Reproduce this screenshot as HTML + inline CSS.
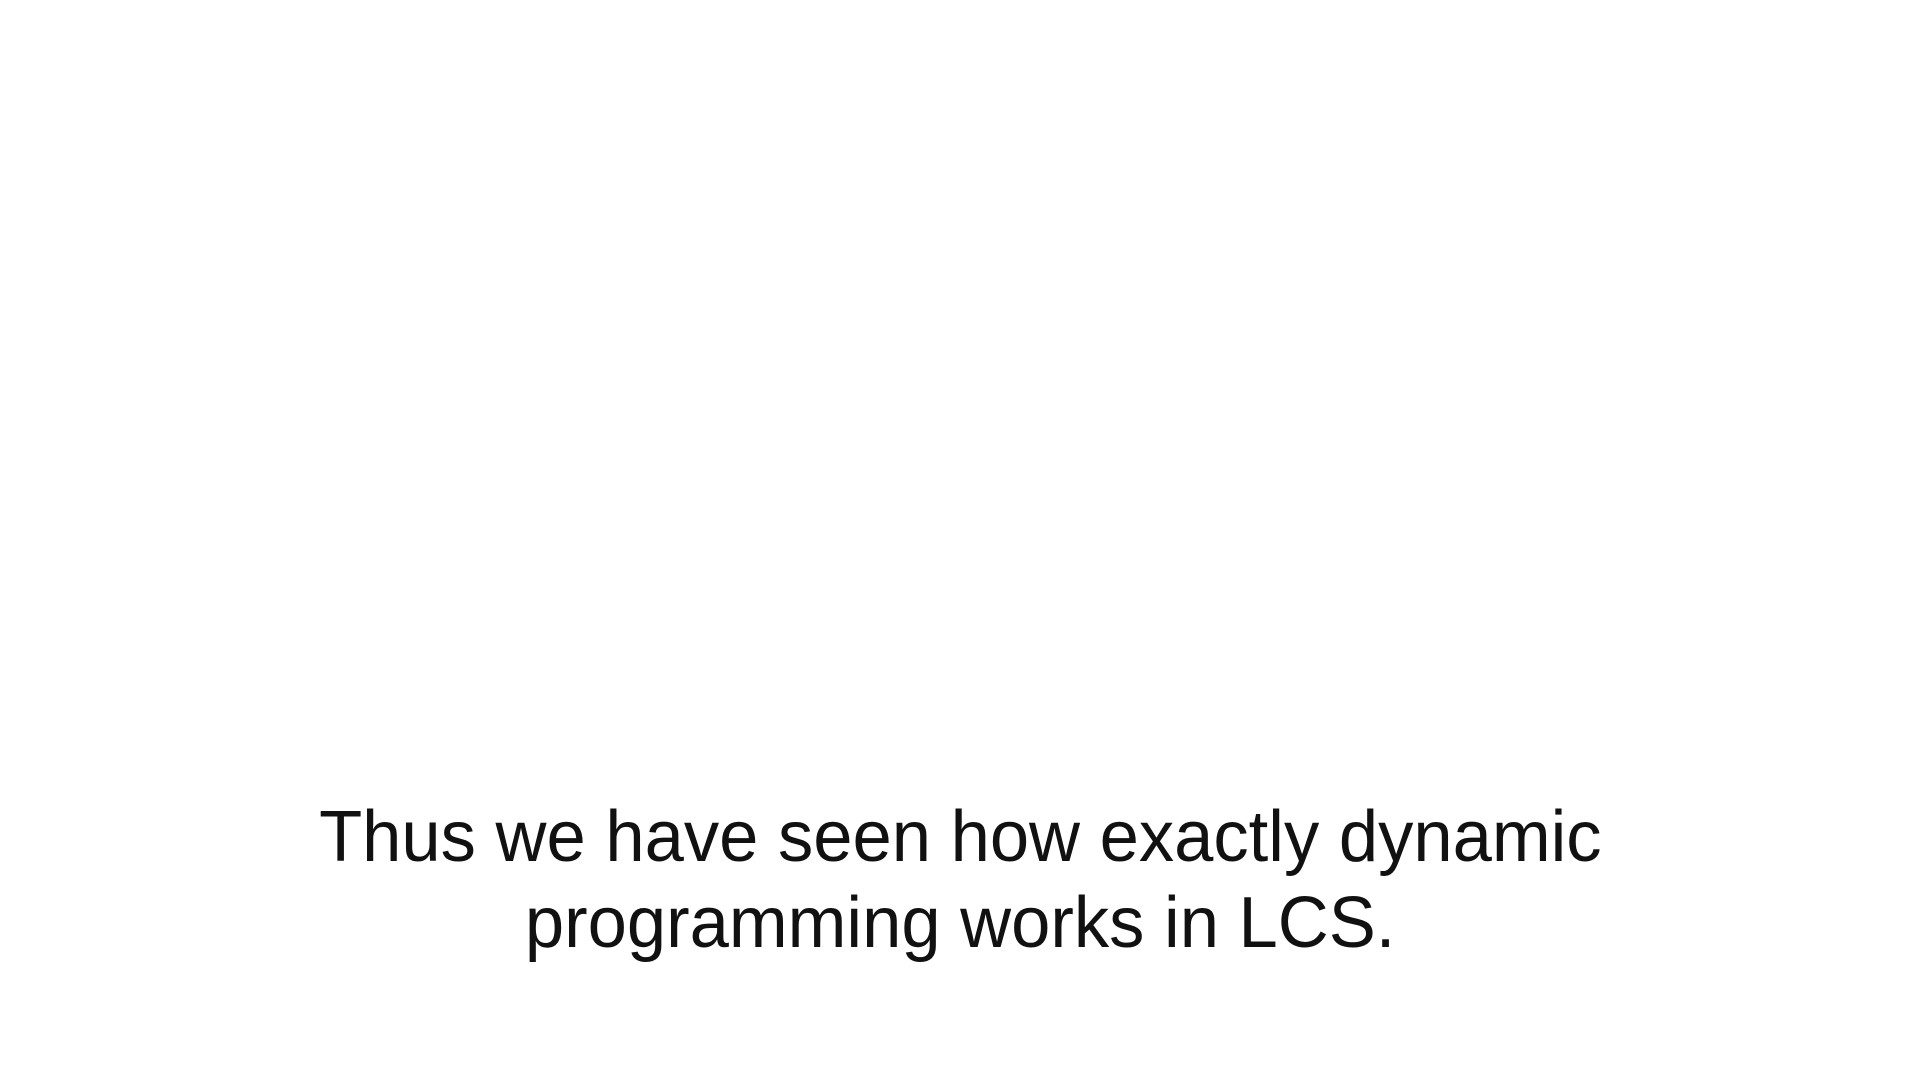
<!DOCTYPE html>
<html><head><style>
html,body{margin:0;padding:0;background:#fff;width:1920px;height:1088px;overflow:hidden}
.l{position:absolute;left:0;width:1920px;text-align:center;font-family:"Liberation Sans",sans-serif;font-size:72px;color:#111;line-height:1;white-space:nowrap}
.l span{display:inline-block;transform:scaleX(0.98);transform-origin:center}
</style></head><body>
<div class="l" style="top:801px"><span>Thus we have seen how exactly dynamic</span></div>
<div class="l" style="top:887px"><span>programming works in LCS.</span></div>
</body></html>
